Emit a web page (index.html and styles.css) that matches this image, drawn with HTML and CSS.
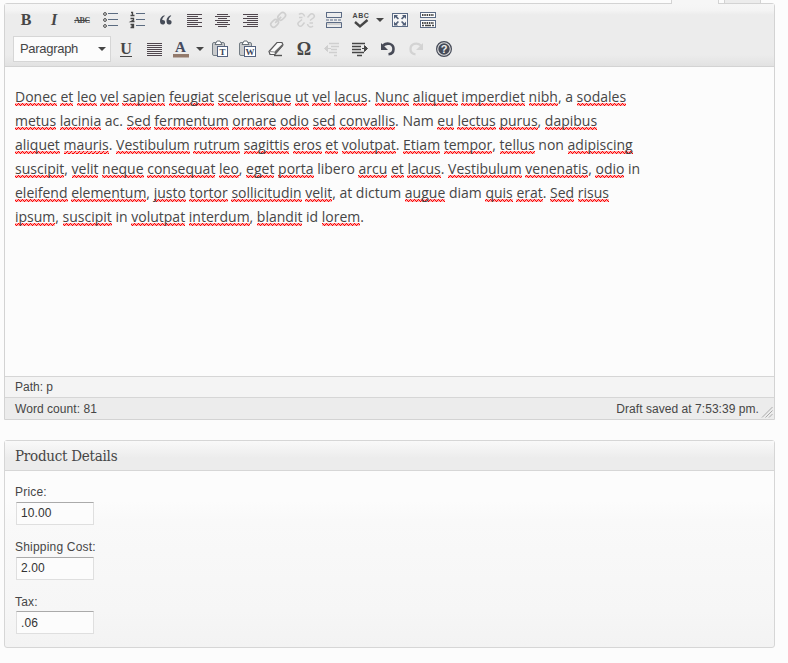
FILE: index.html
```html
<!DOCTYPE html>
<html lang="en">
<head>
<meta charset="utf-8">
<title>Edit Product</title>
<link rel="stylesheet" href="styles.css">
</head>
<body>
<div class="tabs"><span class="tab active"></span><span class="tab"></span></div>
<section class="editor">
  <div class="toolbar">
    <div class="row">
      <span class="btn bold">B</span>
      <span class="btn italic">I</span>
      <span class="btn strike">ABC</span>
      <span class="btn"><svg viewBox="0 0 20 20"><g fill="none" stroke="#464646"><circle cx="5" cy="4" r="1.4"/><circle cx="5" cy="10" r="1.4"/><circle cx="5" cy="16" r="1.4"/></g><path d="M8 3.500h10M8 9.500h10M8 15.500h10" stroke="#5b6b80"/></svg></span>
      <span class="btn"><svg viewBox="0 0 20 20"><path d="M3 2.500h1.500v3M2.500 5.500h4M2.500 8.500h3v1.500l-2.500 1.500h3.500M2.500 14.500h3v3h-3M3.500 16h2" fill="none" stroke="#464646" stroke-width="1.300"/><path d="M8 3.500h9M8 9.500h9M8 15.500h9" stroke="#5b6b80"/></svg></span>
      <span class="btn"><svg viewBox="0 0 20 20"><g fill="#464c58"><path id="q" d="M8.500 5.200C5.500 6 4 8.200 4 11c0 2.300 1 3.600 2.600 3.600 1.500 0 2.500-1 2.500-2.400S8.200 9.900 6.700 9.900H6.200c.2-1.700 1-3.100 2.500-4z"/><use href="#q" x="6.500"/></g></svg></span>
      <span class="btn"><svg viewBox="0 0 20 20"><path d="M3 4.500h15M3 6.500h11M3 8.500h15M3 10.500h11M3 12.500h15M3 14.500h11M3 16.500h15" stroke="#50474e"/></svg></span>
      <span class="btn"><svg viewBox="0 0 20 20"><path d="M5 4.500h11M3 6.500h15M6 8.500h9M3 10.500h15M5 12.500h11M3 14.500h15M6 16.500h9" stroke="#50474e"/></svg></span>
      <span class="btn"><svg viewBox="0 0 20 20"><path d="M3 4.500h15M7 6.500h11M3 8.500h15M7 10.500h11M3 12.500h15M7 14.500h11M3 16.500h15" stroke="#50474e"/></svg></span>
      <span class="btn"><svg viewBox="0 0 20 20"><g fill="none" stroke="#cfcfcf" stroke-width="1.600" transform="rotate(-45 10 10)"><rect x="1" y="7.200" width="8.500" height="5.600" rx="2.800"/><rect x="11" y="7.200" width="8.500" height="5.600" rx="2.800"/><path d="M6 10h8.500"/></g></svg></span>
      <span class="btn"><svg viewBox="0 0 20 20"><g fill="none" stroke="#d0d0d0" stroke-width="1.500"><path d="M8.500 12.500l-2.500 3a2.300 2.300 0 0 1-3.300-3.300L6 9.500M11.500 7.500l2.700-3a2.300 2.300 0 0 1 3.300 3.300L14 10.500M3 4.500c2-2 5-1 5.500 2M3 7.500h3.500M17 16c-2 2-5 1-5.500-2M17 13h-3.500"/></g></svg></span>
      <span class="btn"><svg viewBox="0 0 20 20"><path d="M2.500 2v5.500h15V2M2.500 18v-5.500h15V18M2 2.500h16M2 17.500h16" fill="none" stroke="#5b6b85"/><path d="M3 13h14v2H3z" fill="#d2d2d2"/><path d="M2 10h16" stroke="#5b6b85" stroke-dasharray="3 1"/></svg></span>
      <span class="btn split"><svg viewBox="0 0 20 20"><text class="abc" x="1.500" y="7.500">ABC</text><path d="M4 12l5 4.500 7.500-6.500" fill="none" stroke="#464646" stroke-width="2.400"/></svg><i class="arrow"></i></span>
      <span class="btn"><svg viewBox="0 0 20 20"><rect x="2.500" y="3.500" width="15" height="13" fill="#f7f7f7" stroke="#5b6b85"/><path d="M4 5h4L6.900 6.300 9 8.500 7.800 9.500 5.500 7.300 4 9zM16 5h-4l1.100 1.300L11 8.500l1.200 1 2.300-2.200L16 9zM4 15.500h4l-1.100-1.300L9 12l-1.200-1-2.300 2.200L4 11.500zM16 15.500h-4l1.100-1.300L11 12l1.200-1 2.300 2.200 1.500-1.700z" fill="#526079"/></svg></span>
      <span class="btn"><svg viewBox="0 0 20 20"><g fill="#fff" stroke="#5b6b85"><rect x="2.500" y="2.500" width="15" height="5"/><rect x="2.500" y="10.500" width="15" height="7"/></g><path d="M4 5h12M4 13h12" stroke="#464646" stroke-width="2" stroke-dasharray="1.500 .8"/><path d="M4 15.500h2M7 15.500h6M14 15.500h2" stroke="#464646" stroke-width="1.500"/></svg></span>
    </div>
    <div class="row second">
      <span class="select">Paragraph<i class="arrow"></i></span>
      <span class="btn underline"><span>U</span></span>
      <span class="btn"><svg viewBox="0 0 20 20"><path d="M3 4.500h15M3 6.500h15M3 8.500h15M3 10.500h15M3 12.500h15M3 14.500h15M3 16.500h15" stroke="#50474e"/></svg></span>
      <span class="btn split"><svg viewBox="0 0 20 20"><text class="acol" x="4" y="12.500">A</text><rect x="2" y="15" width="16" height="3.500" fill="#937a6c"/></svg><i class="arrow"></i></span>
      <span class="btn"><svg viewBox="0 0 20 20"><rect x="2.500" y="3.500" width="12" height="13" rx="1.500" fill="#c9cbcd" stroke="#747d84"/><path d="M5 5.500L7 2h3l2 3.500z" fill="#fff" stroke="#687078"/><rect x="7.500" y="7.500" width="10" height="10" fill="#fff" stroke="#53617e"/><text class="paste" x="9.500" y="15.700">T</text></svg></span>
      <span class="btn"><svg viewBox="0 0 20 20"><rect x="1.500" y="3.500" width="12" height="13" rx="1.500" fill="#c9cbcd" stroke="#747d84"/><path d="M4 5.500L6 2h3l2 3.500z" fill="#fff" stroke="#687078"/><rect x="6.500" y="7.500" width="11" height="10" fill="#fff" stroke="#53617e"/><text class="paste" x="7.500" y="15.700">W</text></svg></span>
      <span class="btn"><svg viewBox="0 0 20 20"><path d="M8 16.500h8" stroke="#555" stroke-width="1.400"/><path d="M3 12.500L11 3.500h5L17 6l-8 9.500H4z" fill="#fafafa" stroke="#58585a" stroke-width="1.200"/><path d="M3.500 12.500l5 .5L17 5" fill="none" stroke="#888"/><path d="M8.500 13L17 4.500V7L9 15.500z" fill="#666"/></svg></span>
      <span class="btn omega">Ω</span>
      <span class="btn"><svg viewBox="0 0 20 20"><path d="M7 4.500h10M9 7.500h8M9 10.500h6M7 13.500h8M12 16.500h3" stroke="#cfcfcf" stroke-width="1.400"/><path d="M2.500 9.500L5.500 6.500v6zM5 9.500h4" fill="#cfcfcf" stroke="#cfcfcf"/></svg></span>
      <span class="btn"><svg viewBox="0 0 20 20"><path d="M2 4.500h13M2 7.500h9M2 10.500h9M2 13.500h12M7 16.500h5" stroke="#464646" stroke-width="1.700"/><path d="M17.500 9.500L14.500 6.500v6zM12 9.500h3" fill="#464646" stroke="#464646"/></svg></span>
      <span class="btn"><svg viewBox="0 0 20 20"><path d="M5 6.500C9 3 15.500 4.500 15.500 10c0 3-2 5-5 5.300" fill="none" stroke="#484b57" stroke-width="2.600"/><path d="M3 4v7h7z" fill="#484b57"/></svg></span>
      <span class="btn"><svg viewBox="0 0 20 20"><path d="M15 6.500C11 3 4.500 4.500 4.500 10c0 3 2 5 5 5.300" fill="none" stroke="#d3d3d3" stroke-width="2.300"/><path d="M17 4v7h-7z" fill="#d3d3d3"/></svg></span>
      <span class="btn"><svg viewBox="0 0 20 20"><circle cx="10" cy="10" r="7.400" fill="#ddd" stroke="#464b58" stroke-width="1.200"/><circle cx="10" cy="10" r="5.700" fill="#464b58"/><text class="help" x="6.800" y="13.800">?</text></svg></span>
    </div>
  </div>
  <div class="content">
    <p><span class="line"><u>Donec</u> <u>et</u> <u>leo</u> <u>vel</u> <u>sapien</u> <u>feugiat</u> <u>scelerisque</u> <u>ut</u> <u>vel</u> <u>lacus</u>. <u>Nunc</u> <u>aliquet</u> <u>imperdiet</u> <u>nibh</u>, a <u>sodales</u></span>
    <span class="line"><u>metus</u> <u>lacinia</u> ac. <u>Sed</u> <u>fermentum</u> <u>ornare</u> <u>odio</u> <u>sed</u> <u>convallis</u>. Nam <u>eu</u> <u>lectus</u> <u>purus</u>, <u>dapibus</u></span>
    <span class="line"><u>aliquet</u> <u>mauris</u>. <u>Vestibulum</u> <u>rutrum</u> <u>sagittis</u> <u>eros</u> <u>et</u> <u>volutpat</u>. <u>Etiam</u> <u>tempor</u>, <u>tellus</u> non <u>adipiscing</u></span>
    <span class="line"><u>suscipit</u>, <u>velit</u> <u>neque</u> <u>consequat</u> <u>leo</u>, <u>eget</u> <u>porta</u> libero <u>arcu</u> <u>et</u> <u>lacus</u>. <u>Vestibulum</u> <u>venenatis</u>, <u>odio</u> in</span>
    <span class="line"><u>eleifend</u> <u>elementum</u>, <u>justo</u> <u>tortor</u> <u>sollicitudin</u> <u>velit</u>, at dictum <u>augue</u> diam <u>quis</u> <u>erat</u>. <u>Sed</u> <u>risus</u></span>
    <span class="line"><u>ipsum</u>, <u>suscipit</u> in <u>volutpat</u> <u>interdum</u>, <u>blandit</u> id <u>lorem</u>.</span></p>
  </div>
  <div class="path">Path: p</div>
  <div class="status"><span>Word count: 81</span><span class="saved">Draft saved at 7:53:39 pm.</span><svg class="grip" viewBox="0 0 12 12"><path d="M1 11.500L11.500 1M4.500 11.500l7-7M8 11.500L11.500 8" stroke="#aaa" fill="none"/></svg></div>
</section>
<section class="box">
  <h3>Product Details</h3>
  <div class="fields">
    <label>Price:<input value="10.00"></label>
    <label>Shipping Cost:<input value="2.00"></label>
    <label class="tax">Tax:<input value=".06"></label>
  </div>
</section>
</body>
</html>
```
FILE: styles.css
```css
* { box-sizing: border-box; }
body { margin: 0; height: 663px; overflow: hidden; background: #fcfcfc; color: #464646; font: 12px "Liberation Sans", Arial, sans-serif; }
.tabs { height: 3px; display: flex; gap: 5px; padding-left: 671px; }
.tab { width: 37px; height: 3px; background: #ececec; border: solid #d3d3d3; border-width: 0 1px; }
.tab.active { width: 48px; height: 4px; background: #f6f6f6; position: relative; z-index: 1; }
.editor { width: 771px; height: 417px; margin-left: 4px; border: 1px solid #d3d3d3; border-radius: 3px 3px 0 0; }
.toolbar { height: 63px; padding: 2px 0 0 7px; border-bottom: 1px solid #d3d3d3; background: linear-gradient(#f6f6f6, #f4f4f4 6px, #ececec 11px, #ececec 51px, #e2e2e2); }
.row { height: 28px; display: flex; align-items: center; }
.second { height: 30px; }
.btn { width: 28px; height: 28px; flex: none; display: flex; align-items: center; justify-content: center; }
.btn svg { width: 20px; height: 20px; display: block; }
.split { width: 38px; justify-content: flex-start; padding-left: 3px; }
.arrow { width: 0; height: 0; border: solid transparent; border-width: 4px 4px 0; border-top-color: #464646; }
.split .arrow { margin-left: 5px; }
.bold, .italic, .underline, .omega { font: bold 16px "Liberation Serif", serif; }
.italic { font-style: italic; }
.strike { font: bold 8px "Liberation Serif", serif; letter-spacing: -.5px; text-decoration: line-through; }
.underline span { line-height: 14px; border-bottom: 1px solid #464646; }
.omega { font-size: 18px; }
.abc { font: bold 7px "Liberation Sans", sans-serif; letter-spacing: .6px; fill: #464646; }
.acol { font: bold 15px "Liberation Serif", serif; fill: #464c60; }
.paste { font: bold 9px "Liberation Serif", serif; fill: #3d465c; }
.help { font: bold 11px "Liberation Sans", sans-serif; fill: #eee; }
.select { width: 98px; height: 26px; margin: 0 1px; padding: 0 4px 1px 6px; display: flex; align-items: center; justify-content: space-between; background: #fcfcfc; border: 1px solid #d6d6d6; font-size: 13px; letter-spacing: -.3px; }
.content { height: 309px; padding: 18px 10px; font: 14px/24px "Open Sans", sans-serif; }
.content p { margin: 0; }
.line { display: block; white-space: nowrap; }
/* The wave tile is one line-height tall, so a single fixed grid serves every line. */
.content u {
  text-decoration: none;
  background: url("data:image/svg+xml,%3Csvg xmlns='http://www.w3.org/2000/svg' width='4' height='24' shape-rendering='crispEdges'%3E%3Cpath fill='%23ff0000' fill-opacity='.3' d='M0 0h4v3H0z'/%3E%3Cpath fill='%23ff0000' d='M0 2h1v1H0zM1 1h1v1H1zM2 0h1v1H2zM3 1h1v1H3z'/%3E%3C/svg%3E") 0 7px / 4px 24px repeat fixed;
}
.path { height: 22px; padding-left: 10px; border: solid #d6d6d6; border-width: 1px 0; line-height: 20px; background: #f4f4f4; }
.status { height: 21px; display: flex; align-items: center; padding: 0 1px 0 10px; background: #ececec; letter-spacing: .05px; }
.saved { margin-left: auto; }
.grip { width: 12px; height: 12px; margin: 7px 0 0 2px; }
.box { width: 771px; height: 208px; margin: 20px 0 0 4px; border: 1px solid #d6d6d6; border-radius: 3px; background: linear-gradient(#fcfcfc 60px, #f9f9f9 80px, #f6f6f6 170px, #f3f3f3); }
h3 { height: 30px; margin: 0; padding-left: 10px; border-bottom: 1px solid #d6d6d6; font: 15px/30px "DejaVu Serif Condensed", "DejaVu Serif", serif; letter-spacing: -.25px; background: linear-gradient(#f9f9f9, #ececec 17px); }
.fields { padding: 13px 10px; }
label { display: block; height: 55px; line-height: 16px; letter-spacing: .2px; }
input { display: block; width: 78px; height: 23px; margin: 2px 0 0 1px; padding: 0 4px 2px; border: 1px solid #dfdfdf; border-top-color: #aaa; background: #fcfcfc; color: #333; font: 12px "Liberation Sans", Arial, sans-serif; letter-spacing: .1px; }
.tax input { margin-top: 1px; padding-bottom: 0; }
```
